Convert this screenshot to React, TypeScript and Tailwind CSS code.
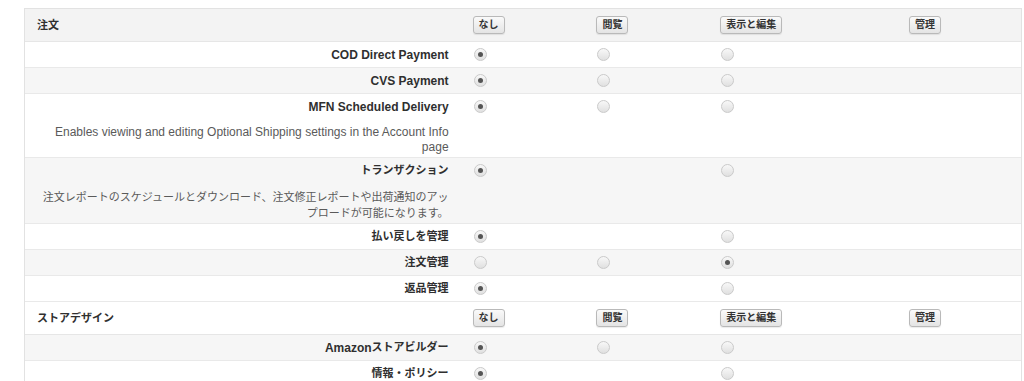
import React from 'react';

type Cell = 'on' | 'off' | null;

interface Row {
  label: React.ReactNode;
  desc?: string;
  jp?: boolean;
  descJp?: boolean;
  cells: Cell[];
}

interface Section {
  title: string;
  headerBg: string;
  rows: Row[];
}

const sections: Section[] = [
  {
    title: '注文',
    headerBg: 'bg-[#f3f3f3]',
    rows: [
      { label: 'COD Direct Payment', cells: ['on', 'off', 'off'] },
      { label: 'CVS Payment', cells: ['on', 'off', 'off'] },
      {
        label: 'MFN Scheduled Delivery',
        desc: 'Enables viewing and editing Optional Shipping settings in the Account Info page',
        cells: ['on', 'off', 'off'],
      },
      {
        label: 'トランザクション',
        jp: true,
        desc: '注文レポートのスケジュールとダウンロード、注文修正レポートや出荷通知のアップロードが可能になります。',
        descJp: true,
        cells: ['on', null, 'off'],
      },
      { label: '払い戻しを管理', jp: true, cells: ['on', null, 'off'] },
      { label: '注文管理', jp: true, cells: ['off', 'off', 'on'] },
      { label: '返品管理', jp: true, cells: ['on', null, 'off'] },
    ],
  },
  {
    title: 'ストアデザイン',
    headerBg: 'bg-white',
    rows: [
      {
        label: (
          <>
            <span className="text-[12px]">Amazon</span>ストアビルダー
          </>
        ),
        jp: true,
        cells: ['on', 'off', 'off'],
      },
      { label: '情報・ポリシー', jp: true, cells: ['on', null, 'off'] },
    ],
  },
];

const colWidths = ['w-[124px]', 'w-[124px]', 'w-[189px]', 'w-[124px]'];
const buttons = ['なし', '閲覧', '表示と編集', '管理'];

function Radio({ on }: { on: boolean }) {
  return (
    <div className="ml-px w-[13px] h-[13px] rounded-full border border-[#cacaca] bg-gradient-to-b from-[#f8f8f8] to-[#e0e0e0] flex items-center justify-center">
      {on && <div className="w-[5px] h-[5px] rounded-full bg-[#555]" />}
    </div>
  );
}

function SmallButton({ text }: { text: string }) {
  return (
    <button
      type="button"
      className="h-[18px] px-[5px] rounded-[3px] border border-[#b9b9b9] bg-gradient-to-b from-[#fafafa] to-[#e4e4e4] text-[10px] font-bold text-[#333] leading-none shadow-[0_1px_1px_rgba(0,0,0,0.08)]"
    >
      {text}
    </button>
  );
}

export default function App() {
  let stripe = 0;
  return (
    <div
      className="w-[1024px] h-[381px] overflow-hidden bg-white pt-[8px] pl-[24px]"
      style={{ fontFamily: '"Liberation Sans", "Noto Sans CJK JP", sans-serif' }}
    >
      <div className="w-[998px] border-l border-r border-t border-[#e2e2e2] text-[#2f2f2f]">
        {sections.map((s) => (
          <div key={s.title}>
            <div className={`flex h-[33px] items-center border-b border-[#e6e6e6] ${s.headerBg}`}>
              <div className="w-[436px] pl-3 text-[11px] font-bold">{s.title}</div>
              {buttons.map((b, i) => (
                <div key={b} className={`${colWidths[i]} pl-3 flex`}>
                  <SmallButton text={b} />
                </div>
              ))}
            </div>
            {s.rows.map((r, ri) => {
              stripe++;
              const bg = stripe % 2 === 0 ? 'bg-[#f6f6f6]' : 'bg-white';
              return (
                <div key={ri} className={`flex border-b border-[#e9e9e9] ${bg}`}>
                  <div className="w-[436px] px-3 text-right">
                    <div
                      className={`h-[25px] flex items-center justify-end font-bold ${
                        r.jp ? 'text-[11px]' : 'text-[12px]'
                      }`}
                    >
                      {r.label}
                    </div>
                    {r.desc && (
                      <div
                        className={`mt-[6px] pb-[2px] text-[#5a5a5a] ${
                          r.descJp ? 'text-[11px] leading-[16px]' : 'text-[12px] leading-[15px]'
                        }`}
                      >
                        {r.desc}
                      </div>
                    )}
                  </div>
                  {r.cells.map((c, ci) => (
                    <div key={ci} className={`${colWidths[ci]} pl-3 h-[25px] flex items-center`}>
                      {c && <Radio on={c === 'on'} />}
                    </div>
                  ))}
                  <div className={colWidths[3]} />
                </div>
              );
            })}
          </div>
        ))}
      </div>
    </div>
  );
}
